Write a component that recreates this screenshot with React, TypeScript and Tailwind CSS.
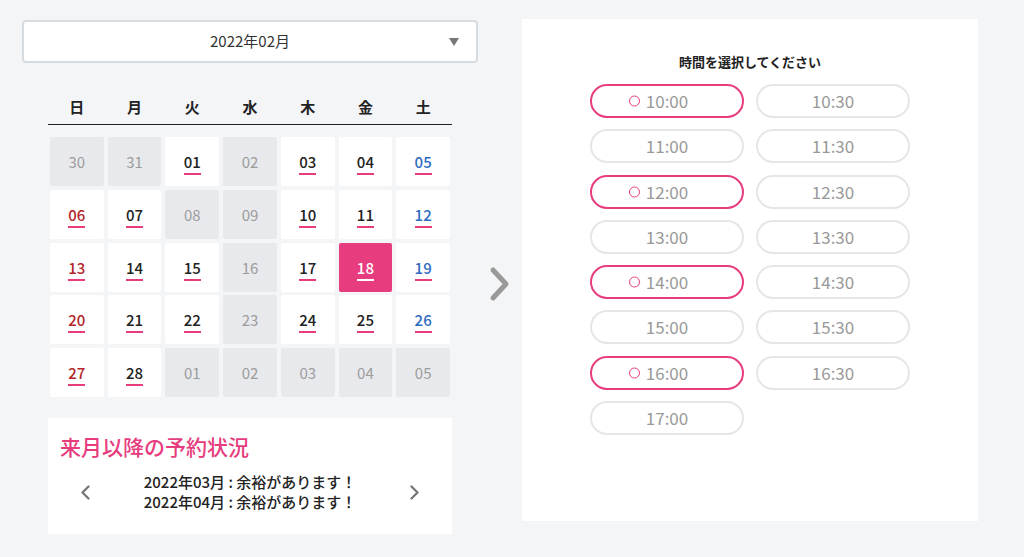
import { useState } from 'react'

type Day = { n: string; off?: boolean; kind?: 'sun' | 'sat' }

const weeks: Day[][] = [
  [{ n: '30', off: true }, { n: '31', off: true }, { n: '01' }, { n: '02', off: true }, { n: '03' }, { n: '04' }, { n: '05', kind: 'sat' }],
  [{ n: '06', kind: 'sun' }, { n: '07' }, { n: '08', off: true }, { n: '09', off: true }, { n: '10' }, { n: '11' }, { n: '12', kind: 'sat' }],
  [{ n: '13', kind: 'sun' }, { n: '14' }, { n: '15' }, { n: '16', off: true }, { n: '17' }, { n: '18' }, { n: '19', kind: 'sat' }],
  [{ n: '20', kind: 'sun' }, { n: '21' }, { n: '22' }, { n: '23', off: true }, { n: '24' }, { n: '25' }, { n: '26', kind: 'sat' }],
  [{ n: '27', kind: 'sun' }, { n: '28' }, { n: '01', off: true }, { n: '02', off: true }, { n: '03', off: true }, { n: '04', off: true }, { n: '05', off: true }],
]

const slots = [
  { t: '10:00', ok: true }, { t: '10:30' },
  { t: '11:00' }, { t: '11:30' },
  { t: '12:00', ok: true }, { t: '12:30' },
  { t: '13:00' }, { t: '13:30' },
  { t: '14:00', ok: true }, { t: '14:30' },
  { t: '15:00' }, { t: '15:30' },
  { t: '16:00', ok: true }, { t: '16:30' },
  { t: '17:00' },
]

function DayCell({ day, selected, onPick }: { day: Day; selected: boolean; onPick: () => void }) {
  if (day.off) {
    return (
      <div className="h-[49px] rounded-[2px] bg-[#e8e9ec] flex flex-col items-center pt-[15px]">
        <span className="text-[15px] leading-[20px] text-[#9c9c9c]">{day.n}</span>
      </div>
    )
  }
  const color = selected
    ? 'text-white'
    : day.kind === 'sun'
      ? 'text-[#b3262a]'
      : day.kind === 'sat'
        ? 'text-[#2e6bbf]'
        : 'text-[#222]'
  return (
    <button
      onClick={onPick}
      className={`h-[49px] rounded-[2px] flex flex-col items-center pt-[15px] ${selected ? 'bg-[#e73c7e]' : 'bg-white'}`}
    >
      <span className={`text-[15px] leading-[20px] font-medium ${color}`}>{day.n}</span>
      <span className={`mt-[1px] h-[2px] w-[17px] ${selected ? 'bg-white' : 'bg-[#e73c7e]'}`} />
    </button>
  )
}

export default function App() {
  const [picked, setPicked] = useState('18')
  const [slot, setSlot] = useState<string | null>(null)

  return (
    <div className="min-h-screen bg-[#f4f5f7] font-['Noto_Sans_CJK_JP','Noto_Sans',sans-serif]">
      <div className="flex pt-[19px] pl-[22px]">
        {/* Calendar column */}
        <div className="w-[456px] pt-[1px]">
          <div className="relative h-[43px] rounded-[4px] border-2 border-[#d5dde2] bg-white flex items-center justify-center">
            <span className="text-[15px] text-[#333]">2022年02月</span>
            <span className="absolute right-[17px] top-[16px] w-0 h-0 border-l-[5px] border-r-[5px] border-t-[8px] border-l-transparent border-r-transparent border-t-[#777]" />
          </div>

          <div className="mx-[26px]">
            <div className="mt-[28px] h-[34px] border-b border-[#222] px-[2px] grid grid-cols-7 gap-x-[4px]">
              {['日', '月', '火', '水', '木', '金', '土'].map((w) => (
                <div key={w} className="text-center text-[15px] leading-[32px] font-bold text-[#222]">
                  {w}
                </div>
              ))}
            </div>

            <div className="mt-[12px] px-[2px] grid grid-cols-7 gap-x-[4px] gap-y-[3.75px]">
              {weeks.flat().map((d, i) => (
                <DayCell
                  key={i}
                  day={d}
                  selected={!d.off && d.n === picked && i > 6}
                  onPick={() => setPicked(d.n)}
                />
              ))}
            </div>

            {/* Next months */}
            <div className="mt-[21px] bg-white h-[116px] pt-[13px]">
              <h2 className="pl-[12px] text-[21px] leading-[30px] font-medium text-[#e73c7e]">来月以降の予約状況</h2>
              <div className="mt-[11px] flex items-center justify-between px-[33px]">
                <svg width="9" height="15" viewBox="0 0 9 15" className="mt-[1px]">
                  <polyline points="7.5,1.5 1.5,7.5 7.5,13.5" fill="none" stroke="#777" strokeWidth="2.3" strokeLinecap="round" strokeLinejoin="round" />
                </svg>
                <div className="text-center text-[15px] leading-[20px] font-medium text-[#222]">
                  <p>2022年03月 : 余裕があります！</p>
                  <p>2022年04月 : 余裕があります！</p>
                </div>
                <svg width="9" height="15" viewBox="0 0 9 15" className="mt-[1px]">
                  <polyline points="1.5,1.5 7.5,7.5 1.5,13.5" fill="none" stroke="#777" strokeWidth="2.3" strokeLinecap="round" strokeLinejoin="round" />
                </svg>
              </div>
            </div>
          </div>
        </div>

        {/* Arrow */}
        <div className="w-[44px] flex items-center justify-center">
          <svg width="22" height="36" viewBox="0 0 22 36" className="mt-[14px]">
            <polyline points="4,4 17,18 4,32" fill="none" stroke="#999" strokeWidth="5" strokeLinecap="round" strokeLinejoin="round" />
          </svg>
        </div>

        {/* Time slots */}
        <div className="w-[456px] h-[502px] self-start bg-white pt-[34px]">
          <p className="text-center text-[13px] leading-[18px] font-bold text-[#222]">時間を選択してください</p>
          <div className="mt-[13px] mx-auto w-[320px] grid grid-cols-2 gap-x-[12px] gap-y-[11.3px]">
            {slots.map((s) => (
              <button
                key={s.t}
                onClick={() => s.ok && setSlot(s.t)}
                className={`h-[34px] rounded-full border-2 flex items-center justify-center ${
                  s.ok ? 'border-[#e73c7e]' : 'border-[#e5e6e9]'
                } ${slot === s.t ? 'bg-[#fdeef4]' : 'bg-white'}`}
              >
                <span className="relative text-[17px] leading-[20px] text-[#999]">
                  {s.ok && (
                    <span className="absolute right-[calc(100%+6px)] top-1/2 -translate-y-1/2 w-[11px] h-[11px] rounded-full border-[1.5px] border-[#e73c7e]" />
                  )}
                  {s.t}
                </span>
              </button>
            ))}
          </div>
        </div>
      </div>
    </div>
  )
}
